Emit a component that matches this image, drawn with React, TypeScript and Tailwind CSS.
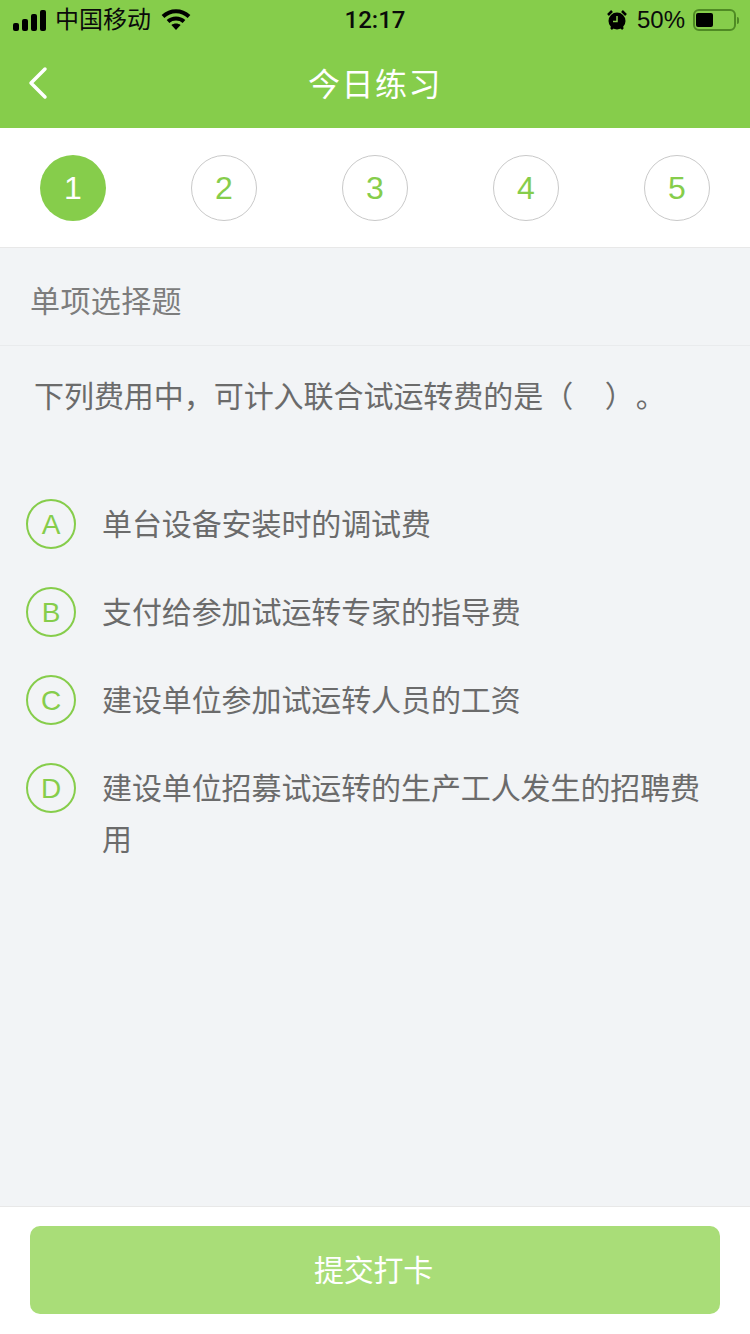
const font = { fontFamily: '"Liberation Sans", "Noto Sans CJK SC", sans-serif' }

const steps = [1, 2, 3, 4, 5]

const options = [
    { key: 'A', text: '单台设备安装时的调试费' },
    { key: 'B', text: '支付给参加试运转专家的指导费' },
    { key: 'C', text: '建设单位参加试运转人员的工资' },
    { key: 'D', text: '建设单位招募试运转的生产工人发生的招聘费用' },
]

function StatusBar() {
    return (
        <div className="h-10 flex items-center justify-between pl-[13px] pr-[11px] text-[#0a0a0a]">
            <div className="flex items-center w-[250px]">
                <svg width="33" height="21" viewBox="0 0 33 21" fill="#000">
                    <rect x="0" y="13" width="6" height="8" rx="2" />
                    <rect x="9" y="9" width="6" height="12" rx="2" />
                    <rect x="18" y="4" width="6" height="17" rx="2" />
                    <rect x="27" y="0" width="6" height="21" rx="2" />
                </svg>
                <span className="text-[24px] ml-[9px] leading-none">中国移动</span>
                <svg className="ml-[10px]" width="30" height="22" viewBox="0 0 30 22" fill="none" stroke="#000" strokeWidth="4">
                    <path d="M2 7.5C9.5 0.5 20.5 0.5 28 7.5" />
                    <path d="M7 12.5C11.5 8.5 18.5 8.5 23 12.5" />
                    <path d="M15 21l-4.6-5c2.6-2 6.6-2 9.2 0z" fill="#000" stroke="none" />
                </svg>
            </div>
            <span className="text-[24px] font-medium leading-none pr-[2px]" style={{ fontFamily: 'Roboto, sans-serif' }}>12:17</span>
            <div className="flex items-center justify-end w-[250px]">
                <svg width="22" height="22" viewBox="0 0 22 22">
                    <circle cx="11" cy="12" r="8.5" fill="#000" />
                    <path d="M2 6l4-4M20 6l-4-4M5 20l2-2M17 20l-2-2" stroke="#000" strokeWidth="2.5" />
                    <path d="M11 7v5.5H7" stroke="#86cd4b" strokeWidth="1.5" fill="none" />
                </svg>
                <span className="text-[24px] ml-[9px] leading-none">50%</span>
                <div className="ml-[8px] w-[43px] h-[22px] border-2 border-[#4f8a24] rounded-[6px] py-[2px] pl-[1px]">
                    <div className="w-[17px] h-full bg-black rounded-[2px]" />
                </div>
                <div className="w-[2px] h-[7px] bg-[#4f8a24] ml-[1px] rounded-r" />
            </div>
        </div>
    )
}

export default function App() {
    return (
        <div className="w-[750px] h-[1334px] flex flex-col bg-[#f2f4f6]" style={font}>
            <div className="h-32 bg-[#86cd4b] shrink-0">
                <StatusBar />
                <div className="relative h-[88px] flex items-center justify-center pt-[2px]">
                    <svg className="absolute left-[27px] top-[26px]" width="22" height="34" viewBox="0 0 22 34" fill="none" stroke="#fff" strokeWidth="3.5" strokeLinecap="round" strokeLinejoin="round">
                        <path d="M18 3L4 17l14 14" />
                    </svg>
                    <span className="text-white text-[32px] tracking-[1.5px]">今日练习</span>
                </div>
            </div>

            <div className="h-[120px] shrink-0 bg-white border-b border-[#e8e8e8] px-10 flex items-center justify-between pt-[1px]">
                {steps.map((n) =>
                    n === 1 ? (
                        <div key={n} className="w-[66px] h-[66px] rounded-full bg-[#86cd4b] text-white text-[32px] flex items-center justify-center">
                            {n}
                        </div>
                    ) : (
                        <div key={n} className="w-[66px] h-[66px] rounded-full border border-[#c9c9c9] text-[#86cd4b] text-[32px] flex items-center justify-center">
                            {n}
                        </div>
                    )
                )}
            </div>

            <div className="h-[98px] shrink-0 border-b border-[#e9ebed] pl-[30px] pt-[10px] flex items-center text-[#7d7d7d] text-[30px] tracking-[0.4px]">
                单项选择题
            </div>

            <div className="flex-1 px-[26px]">
                <p className="pl-[8px] pt-[28px] text-[30px] leading-[46px] tracking-[-0.05px] text-[#6b6b6b]">
                    下列费用中，可计入联合试运转费的是（<span className="ml-[15px]">&nbsp;&nbsp;</span>）<span className="ml-[16px]">。</span>
                </p>
                <div className="mt-[79px] flex flex-col gap-[37px]">
                    {options.map((o) => (
                        <div key={o.key} className="flex items-start">
                            <div className="w-[50px] h-[50px] shrink-0 rounded-full border-2 border-[#86cd4b] text-[#86cd4b] text-[28px] flex items-center justify-center pt-[1px]">
                                {o.key}
                            </div>
                            <div className="ml-[26px] text-[30px] leading-[51px] tracking-[-0.1px] text-[#6b6b6b]">{o.text}</div>
                        </div>
                    ))}
                </div>
            </div>

            <div className="h-[128px] shrink-0 bg-white border-t border-[#e8e8e8] px-[30px] pt-[19px]">
                <div className="h-[88px] rounded-[10px] bg-[#a9dd78] text-white text-[30px] tracking-[-0.3px] pr-[3px] flex items-center justify-center">
                    提交打卡
                </div>
            </div>
        </div>
    )
}
